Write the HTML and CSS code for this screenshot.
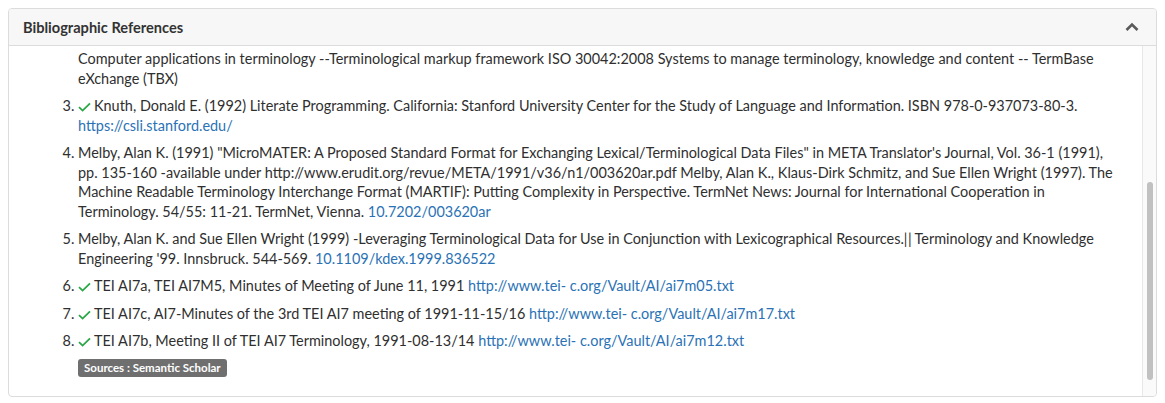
FILE: index.html
```html
<!DOCTYPE html>
<html lang="en">
<head>
<meta charset="utf-8">
<title>Bibliographic References</title>
<link rel="stylesheet" href="styles.css">
</head>
<body>
<section class="card">
  <header class="card-header">
    <h2 class="card-title">Bibliographic References</h2>
    <button class="toggle" aria-label="Collapse">
      <svg width="14" height="10" viewBox="0 0 14 10"><path d="M1.5 8 L7 2.5 L12.5 8" fill="none" stroke="#5a5a5a" stroke-width="2.6"/></svg>
    </button>
  </header>
  <div class="card-body">
    <div class="scroll-view">
      <p class="cont">Computer applications in terminology --Terminological markup framework ISO 30042:2008 Systems to manage terminology, knowledge and content -- TermBase eXchange (TBX)</p>
      <ol class="refs" start="3">
        <li><svg class="check" width="13" height="10" viewBox="0 0 13 10"><path d="M1 5.2 L4.6 8.6 L12 1.4" fill="none" stroke="#28a745" stroke-width="1.8"/></svg>Knuth, Donald E. (1992) Literate Programming. California: Stanford University Center for the Study of Language and Information. ISBN 978-0-937073-80-3. <a href="#">https://csli.stanford.edu/</a></li>
        <li>Melby, Alan K. (1991) "MicroMATER: A Proposed Standard Format for Exchanging Lexical/Terminological Data Files" in META Translator's Journal, Vol. 36-1 (1991), pp. 135-160 -available under http://www.erudit.org/revue/META/1991/v36/n1/003620ar.pdf Melby, Alan K., Klaus-Dirk Schmitz, and Sue Ellen Wright (1997). The Machine Readable Terminology Interchange Format (MARTIF): Putting Complexity in Perspective. TermNet News: Journal for International Cooperation in Terminology. 54/55: 11-21. TermNet, Vienna. <a href="#">10.7202/003620ar</a></li>
        <li>Melby, Alan K. and Sue Ellen Wright (1999) -Leveraging Terminological Data for Use in Conjunction with Lexicographical Resources.ǁ Terminology and Knowledge Engineering '99. Innsbruck. 544-569. <a href="#">10.1109/kdex.1999.836522</a></li>
        <li><svg class="check" width="13" height="10" viewBox="0 0 13 10"><path d="M1 5.2 L4.6 8.6 L12 1.4" fill="none" stroke="#28a745" stroke-width="1.8"/></svg>TEI AI7a, TEI AI7M5, Minutes of Meeting of June 11, 1991 <a href="#">http://www.tei- c.org/Vault/AI/ai7m05.txt</a></li>
        <li><svg class="check" width="13" height="10" viewBox="0 0 13 10"><path d="M1 5.2 L4.6 8.6 L12 1.4" fill="none" stroke="#28a745" stroke-width="1.8"/></svg>TEI AI7c, AI7-Minutes of the 3rd TEI AI7 meeting of 1991-11-15/16 <a href="#">http://www.tei- c.org/Vault/AI/ai7m17.txt</a></li>
        <li><svg class="check" width="13" height="10" viewBox="0 0 13 10"><path d="M1 5.2 L4.6 8.6 L12 1.4" fill="none" stroke="#28a745" stroke-width="1.8"/></svg>TEI AI7b, Meeting II of TEI AI7 Terminology, 1991-08-13/14 <a href="#">http://www.tei- c.org/Vault/AI/ai7m12.txt</a></li>
      </ol>
      <div class="sources"><span class="badge">Sources : Semantic Scholar</span></div>
    </div>
    <div class="scrollbar"><div class="thumb"></div></div>
  </div>
</section>
</body>
</html>
```

FILE: styles.css
```css
html, body {
  margin: 0;
  padding: 0;
}
body {
  padding: 8px;
  font-family: Lato, "Open Sans", sans-serif;
  font-size: 14.45px;
  color: #2f2f2f;
  background: #fff;
}
.card {
  border: 1px solid #dcdcdc;
  border-radius: 4px;
  height: 389px;
  box-sizing: border-box;
  display: flex;
  flex-direction: column;
  overflow: hidden;
}
.card-header {
  height: 36px;
  flex: none;
  background: #f7f7f7;
  border-bottom: 1px solid #dcdcdc;
  display: flex;
  align-items: center;
  justify-content: space-between;
  padding: 0 17px 0 14px;
}
.card-title {
  margin: 0;
  font-size: 14.6px;
  font-weight: 700;
  color: #333;
}
.toggle {
  border: 0;
  background: none;
  padding: 0;
  display: flex;
}
.card-body {
  flex: 1;
  display: flex;
  min-height: 0;
}
.scroll-view {
  flex: 1;
  overflow: hidden;
  padding: 3px 23px 0 69px;
  line-height: 19.6px;
}
.cont {
  margin: 0 0 7.8px;
}
.refs {
  margin: 0;
  padding-left: 0;
}
.refs li {
  margin-bottom: 7.8px;
}
.check {
  margin-right: 3px;
  vertical-align: -1px;
}
a {
  color: #2a72b5;
  text-decoration: none;
}
.sources {
  margin-top: 3px;
  line-height: 18px;
}
.badge {
  display: inline-block;
  background: #6f6f6f;
  color: #fff;
  font-size: 11.5px;
  font-weight: 700;
  padding: 2px 6px;
  border-radius: 3px;
  line-height: 14px;
}
.scrollbar {
  flex: none;
  width: 14px;
  background: #fafafa;
  border-left: 1px solid #e8e8e8;
  padding: 136px 3px 0 4px;
  box-sizing: border-box;
}
.thumb {
  height: 198px;
  background: #c1c1c1;
  border-radius: 4px;
}
```
